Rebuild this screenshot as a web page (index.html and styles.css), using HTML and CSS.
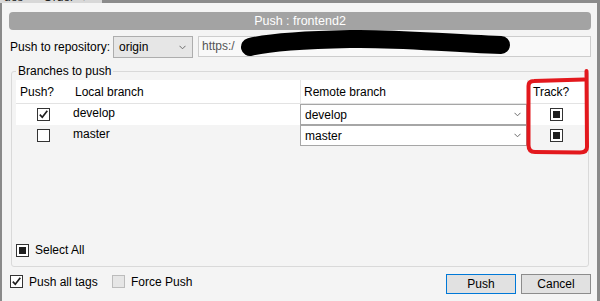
FILE: index.html
```html
<!DOCTYPE html>
<html>
<head>
<meta charset="utf-8">
<link rel="stylesheet" href="styles.css">
</head>
<body>
<div class="topstrip">
  <div class="tabs"><span class="tab">ues</span><span class="sep"></span><span class="tab">Date Order</span><span class="tab arrow">▾</span><span class="sep"></span></div>
</div>
<div class="dialog">
  <div class="title">Push : frontend2</div>
  <div class="reporow">
    <span class="label">Push to repository:</span>
    <div class="combo repo"><span>origin</span><svg class="chev" width="7" height="5" viewBox="0 0 7 5"><polyline points="0.5,0.8 3.5,3.8 6.5,0.8" fill="none" stroke="#6d6d6d" stroke-width="1"/></svg></div>
    <div class="url">https:/</div>
  </div>
  <fieldset class="group">
    <legend>Branches to push</legend>
    <div class="table">
      <div class="row head">
        <div class="h">Push?</div>
        <div class="h">Local branch</div>
        <div class="h remote-h">Remote branch</div>
        <div class="h track-h">Track?</div>
      </div>
      <div class="row sel">
        <div class="cbcell"><span class="cb"><svg width="11" height="11" viewBox="0 0 11 11"><path d="M1.8 5.6 L4.3 8.3 L9.3 1.8" fill="none" stroke="#1e1e1e" stroke-width="1.7"/></svg></span></div>
        <div class="local">develop</div>
        <div class="combo remote"><span>develop</span><svg class="chev" width="7" height="5" viewBox="0 0 7 5"><polyline points="0.5,0.8 3.5,3.8 6.5,0.8" fill="none" stroke="#6d6d6d" stroke-width="1"/></svg></div>
        <div class="cbcell"><span class="cb ind"></span></div>
      </div>
      <div class="row">
        <div class="cbcell"><span class="cb"></span></div>
        <div class="local">master</div>
        <div class="combo remote"><span>master</span><svg class="chev" width="7" height="5" viewBox="0 0 7 5"><polyline points="0.5,0.8 3.5,3.8 6.5,0.8" fill="none" stroke="#6d6d6d" stroke-width="1"/></svg></div>
        <div class="cbcell"><span class="cb ind"></span></div>
      </div>
    </div>
    <div class="selectall"><span class="cb ind"></span><span>Select All</span></div>
  </fieldset>
  <div class="bottom">
    <div class="opt first"><span class="cb"><svg width="11" height="11" viewBox="0 0 11 11"><path d="M1.8 5.6 L4.3 8.3 L9.3 1.8" fill="none" stroke="#1e1e1e" stroke-width="1.7"/></svg></span><span>Push all tags</span></div>
    <div class="opt"><span class="cb dis"></span><span>Force Push</span></div>
    <div class="buttons">
      <button class="btn default">Push</button>
      <button class="btn">Cancel</button>
    </div>
  </div>
</div>
<svg class="overlay" width="600" height="301" viewBox="0 0 600 301">
  <path class="redact" d="M250 47 C 270 42, 300 40, 350 39 C 400 38, 440 43, 501 45" fill="none" stroke="#000" stroke-width="18" stroke-linecap="round"/>
  <path class="mark" d="M586.5 71 L587 147 Q587 152.5 580 152.5 L535 152 Q528.5 152 528.5 145 L528.5 86 Q528.5 81 534 81 L584 79.5" fill="none" stroke="#e3181d" stroke-width="4" stroke-linecap="round" stroke-linejoin="round"/>
</svg>
</body>
</html>
```

FILE: styles.css
```css
* { box-sizing: border-box; }
html, body { margin: 0; padding: 0; }
body {
  position: relative;
  width: 600px;
  height: 301px;
  overflow: hidden;
  background: #f4f4f4;
  font-family: "Segoe UI", "Liberation Sans", Arial, sans-serif;
  font-size: 12px;
  color: #000;
}

.topstrip {
  height: 3px;
  background: #8b8b8b;
  overflow: hidden;
  display: flex;
}
.tabs {
  width: 102px;
  height: 3px;
  background: #d8d8d8;
  display: flex;
  align-items: flex-end;
  overflow: hidden;
  color: #222;
}
.tab { line-height: 12px; padding: 0 4px; }
.tab.arrow { color: #888; padding: 0 3px; }
.sep { width: 1px; height: 3px; background: #9a9a9a; margin: 0 6px; }

.dialog {
  position: relative;
  height: 298px;
  border-left: 2px solid #8a8a8a;
  border-right: 3px solid #8a8a8a;
  padding: 9px 6px 0 7px;
}

.title {
  height: 18px;
  background: #a3a3a3;
  border-radius: 4px;
  color: #fff;
  text-align: center;
  line-height: 18px;
  font-size: 12.5px;
}

.reporow {
  display: flex;
  align-items: flex-start;
  margin-top: 6px;
  height: 22px;
}
.label {
  margin-left: 1px;
  width: 103px;
  line-height: 22px;
}
.combo {
  display: flex;
  align-items: center;
  justify-content: space-between;
}
.combo.repo {
  width: 80px;
  height: 22px;
  background: #e6e6e6;
  border: 1px solid #adadad;
  padding: 0 6px 0 5px;
}
.url {
  margin-left: 5px;
  flex: 1;
  height: 21px;
  border: 1px solid #cdcdcd;
  background: #f9f9f9;
  color: #555;
  padding-left: 3px;
  line-height: 19px;
}

.group {
  margin: 6px 2px 0 2px;
  padding: 0 2px 8px 4px;
  border: 1px solid #d9d9d9;
  border-radius: 3px;
  min-width: 0;
}
.group legend {
  padding: 0 2px;
  line-height: 14px;
}

.table {
  display: flex;
  flex-direction: column;
  height: 160px;
  margin-top: 2px;
}
.row {
  display: grid;
  grid-template-columns: 55px 229px 227px 59px;
  height: 21px;
  align-items: stretch;
}
.row.head {
  height: 24px;
  background: #fff;
  border-bottom: 1px solid #e3e3e3;
}
.h {
  padding: 2px 0 0 4px;
  line-height: 21px;
}
.remote-h { border-left: 1px solid #e5e5e5; padding-left: 3px; }
.track-h { border-left: 1px solid #e5e5e5; padding-left: 5px; }
.row.sel { background: #fff; }

.cbcell {
  display: flex;
  align-items: center;
  justify-content: center;
}
.local {
  padding-left: 2px;
  line-height: 19px;
}
.combo.remote {
  height: 21px;
  background: #fff;
  border: 1px solid #a6a6a6;
  padding: 0 5px 0 4px;
}

.cb {
  width: 13px;
  height: 13px;
  flex: none;
  border: 1px solid #333;
  background: #fff;
  display: inline-flex;
  align-items: center;
  justify-content: center;
}
.cb.ind::after {
  content: "";
  width: 7px;
  height: 7px;
  background: #1e1e1e;
}
.cb.dis {
  background: #e6e6e6;
  border-color: #bcbcbc;
}

.selectall {
  display: flex;
  align-items: center;
  gap: 6px;
  height: 16px;
  margin-top: 2px;
}

.bottom {
  display: flex;
  align-items: flex-start;
  margin-top: 7px;
  height: 20px;
  padding-left: 1px;
}
.opt {
  display: flex;
  align-items: center;
  gap: 6px;
  height: 13px;
  margin-top: 1px;
}
.opt.first { width: 102px; }
.buttons {
  margin-left: auto;
  display: flex;
  gap: 5px;
}
.btn {
  width: 70px;
  height: 20px;
  margin: 0;
  padding: 0;
  font: inherit;
  color: #000;
  background: #e1e1e1;
  border: 1px solid #8c8c8c;
}
.btn.default { border-color: #0078d7; }

.overlay {
  position: absolute;
  left: 0;
  top: 0;
  pointer-events: none;
}
```
